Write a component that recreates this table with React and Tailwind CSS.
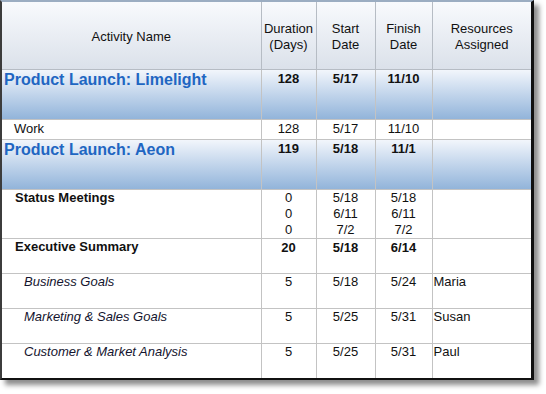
import React from 'react';

const rows = [
    { type: 'group', name: 'Product Launch: Limelight', dur: '128', start: '5/17', finish: '11/10' },
    { type: 'plain', name: 'Work', dur: '128', start: '5/17', finish: '11/10' },
    { type: 'group', name: 'Product Launch: Aeon', dur: '119', start: '5/18', finish: '11/1' },
    { type: 'multi', name: 'Status Meetings', dur: ['0', '0', '0'], start: ['5/18', '6/11', '7/2'], finish: ['5/18', '6/11', '7/2'] },
    { type: 'summary', name: 'Executive Summary', dur: '20', start: '5/18', finish: '6/14' },
    { type: 'task', name: 'Business Goals', dur: '5', start: '5/18', finish: '5/24', res: 'Maria' },
    { type: 'task', name: 'Marketing & Sales Goals', dur: '5', start: '5/25', finish: '5/31', res: 'Susan' },
    { type: 'task', name: 'Customer & Market Analysis', dur: '5', start: '5/25', finish: '5/31', res: 'Paul' },
];

const cell = 'border-r border-b border-[#c3c3c3] align-top';

const Lines = ({ v }) => (Array.isArray(v) ? v.map((x, i) => <div key={i}>{x}</div>) : v);

export default function App() {
    return (
        <div className="w-[546px] h-[394px] bg-white font-['Liberation_Sans',Arial,sans-serif] text-[13px] leading-[16px] text-[#111]">
            <div className="w-[534px] h-[380px] border-l-2 border-t-2 border-r-[3px] border-b-2 border-l-[#3c3c3c] border-t-[#9badc2] border-r-[#111] border-b-[#111] shadow-[5px_5px_5px_rgba(0,0,0,0.45)] overflow-hidden">
                <table className="table-fixed border-collapse w-[529px]">
                    <colgroup>
                        <col className="w-[259px]" />
                        <col className="w-[55px]" />
                        <col className="w-[59px]" />
                        <col className="w-[57px]" />
                        <col className="w-[99px]" />
                    </colgroup>
                    <thead>
                        <tr className="h-[67px] bg-gradient-to-b from-[#f8fafd] to-[#dbe1ea]">
                            <th className="border-r border-b border-[#b6bcc4] font-normal align-middle pt-[3px]">Activity Name</th>
                            <th className="border-r border-b border-[#b6bcc4] font-normal align-top pt-[19px]">Duration<br />(Days)</th>
                            <th className="border-r border-b border-[#b6bcc4] font-normal align-top pt-[19px]">Start<br />Date</th>
                            <th className="border-r border-b border-[#b6bcc4] font-normal align-top pt-[19px]">Finish<br />Date</th>
                            <th className="border-b border-[#b6bcc4] font-normal align-top pt-[19px]">Resources<br />Assigned</th>
                        </tr>
                    </thead>
                    <tbody>
                        {rows.map((r, i) => {
                            const group = r.type === 'group';
                            const bold = group || r.type === 'summary';
                            const rowCls = group
                                ? 'h-[50px] bg-gradient-to-b from-[#f4f7fc] to-[#92b4da]'
                                : r.type === 'plain'
                                    ? 'h-[20px]'
                                    : r.type === 'multi'
                                        ? 'h-[47px]'
                                        : 'h-[35px]';
                            const nameCls = group
                                ? 'pl-[2px] pt-[1px] text-[16px] leading-[18px] font-bold text-[#1f66c2]'
                                : r.type === 'plain'
                                    ? 'pl-[12px] pt-[1px]'
                                    : r.type === 'task'
                                        ? 'pl-[22px] pt-0 italic text-[#14142e]'
                                        : 'pl-[13px] font-bold';
                            const num = `${cell} text-center ${bold ? 'font-bold' : ''} ${r.type === 'multi' || r.type === 'task' ? 'pt-0' : 'pt-[1px]'}`;
                            return (
                                <tr key={i} className={rowCls}>
                                    <td className={`${cell} ${nameCls}`}>{r.name}</td>
                                    <td className={num}><Lines v={r.dur} /></td>
                                    <td className={num}><Lines v={r.start} /></td>
                                    <td className={num}><Lines v={r.finish} /></td>
                                    <td className="border-b border-[#c3c3c3] align-top pl-[1px] pt-0">{r.res}</td>
                                </tr>
                            );
                        })}
                    </tbody>
                </table>
            </div>
        </div>
    );
}
